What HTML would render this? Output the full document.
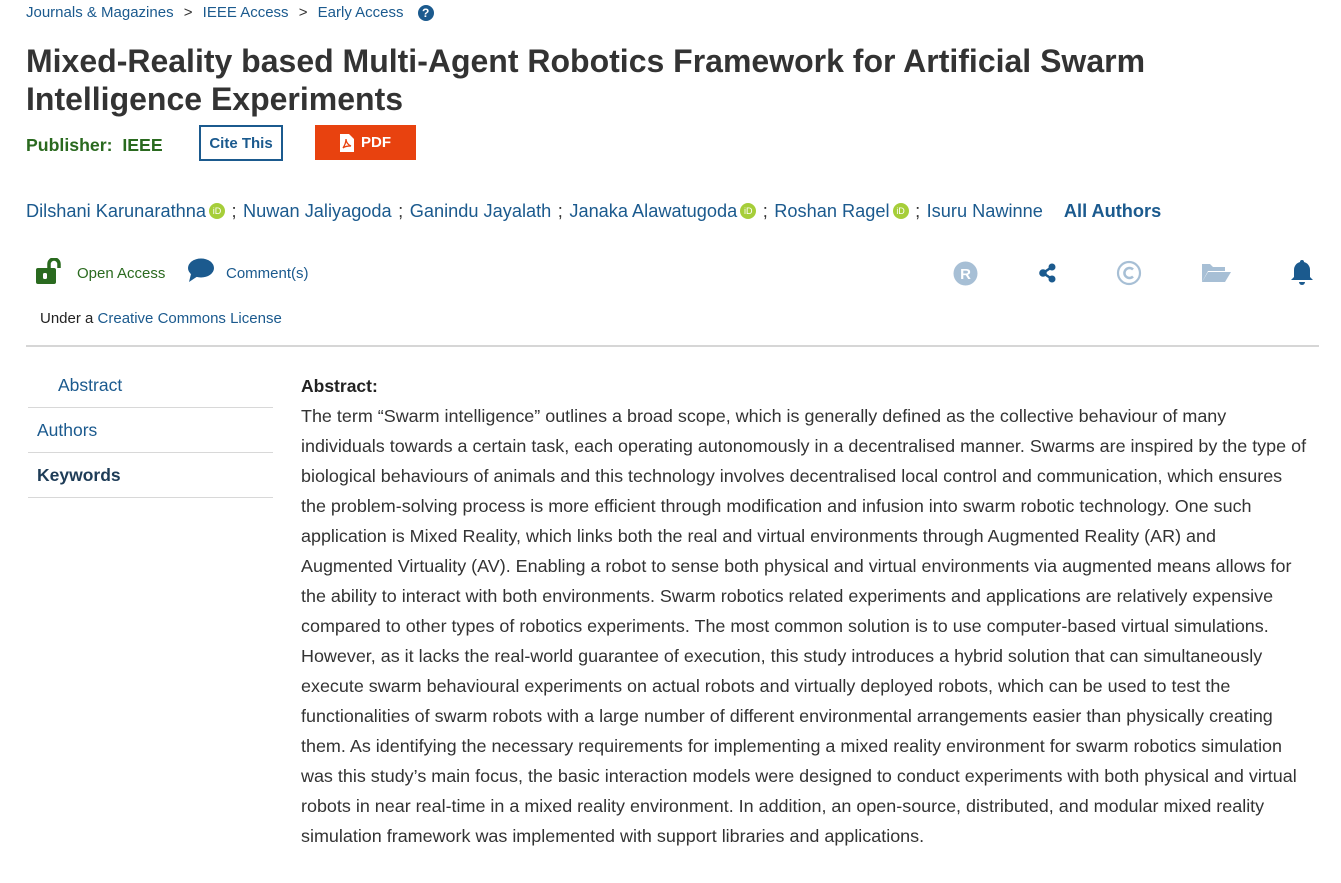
<!DOCTYPE html>
<html><head><meta charset="utf-8"><style>
*{margin:0;padding:0;box-sizing:border-box}
body{width:1341px;height:883px;background:#fff;font-family:"Liberation Sans",Arial,sans-serif;color:#333;position:relative;overflow:hidden}
.a{position:absolute;white-space:nowrap}
.blue{color:#1b5a8e}
.bc{top:4px;left:26px;font-size:15px}
.title{top:42px;left:26px;font-size:32px;font-weight:bold;line-height:38px;color:#333}
.pub{top:135px;left:26px;font-size:17.7px;font-weight:bold;color:#2a6a1f}
.cite{top:125px;left:199px;width:84px;height:36px;border:2px solid #1b5a8e;color:#1b5a8e;font-weight:bold;font-size:15px;text-align:center;line-height:34px}
.pdf{top:125px;left:315px;width:101px;height:35px;background:#e8420f;color:#fff;font-weight:bold;font-size:15px;line-height:35px}
.auth{top:201px;left:26px;font-size:18.2px;color:#1b5a8e}
.orc{display:inline-block;width:16px;height:16px;border-radius:50%;background:#a6ce39;color:#fff;font-size:9px;line-height:16px;text-align:center;vertical-align:3px;margin-left:3px}
.sep{color:#333;margin:0 6.5px}
.side{left:28px;width:245px;border-bottom:1px solid #d8d8d8;font-size:17.5px;height:45px}
.abs{left:301px;font-size:17.95px;line-height:30px;color:#333}
</style></head><body>
<div class="a bc blue">Journals &amp; Magazines <span style="color:#333;margin:0 6px">&gt;</span> IEEE Access <span style="color:#333;margin:0 6px">&gt;</span> Early Access <span style="display:inline-block;width:16px;height:16px;border-radius:50%;background:#1b5a8e;color:#fff;font-size:12px;font-weight:bold;text-align:center;line-height:16px;margin-left:10px">?</span></div>
<div class="a title">Mixed-Reality based Multi-Agent Robotics Framework for Artificial Swarm<br>Intelligence Experiments</div>
<div class="a pub">Publisher:&nbsp; IEEE</div>
<div class="a cite">Cite This</div>
<div class="a pdf"><svg style="position:absolute;left:25px;top:9px" width="14" height="18" viewBox="0 0 14 18"><path d="M0 0h9l5 5v13H0z" fill="#fff"/><path d="M3 14c2-3 3-6 3-9 0 3 2 6 5 7-3 0-6 0-8 2z" fill="none" stroke="#e8420f" stroke-width="1.3"/></svg><span style="position:absolute;left:46px">PDF</span></div>
<div class="a auth">Dilshani Karunarathna<span class="orc">iD</span><span class="sep">;</span>Nuwan Jaliyagoda<span class="sep">;</span>Ganindu Jayalath<span class="sep">;</span>Janaka Alawatugoda<span class="orc">iD</span><span class="sep">;</span>Roshan Ragel<span class="orc">iD</span><span class="sep">;</span>Isuru Nawinne<b style="margin-left:21px">All Authors</b></div>
<svg class="a" style="left:36px;top:258px" width="30" height="26" viewBox="0 0 30 26"><rect x="0" y="10" width="20" height="16" rx="2" fill="#2a6a1f"/><path d="M13 11V6a5 5 0 0 1 10 0v4" fill="none" stroke="#2a6a1f" stroke-width="3.5"/><rect x="7" y="15" width="4" height="6" rx="1.5" fill="#fff"/></svg>
<div class="a" style="left:77px;top:265px;font-size:15px;color:#2a6a1f">Open Access</div>
<svg class="a" style="left:187px;top:258px" width="28" height="25" viewBox="0 0 28 25"><ellipse cx="14" cy="10" rx="13" ry="9.5" fill="#1b5a8e"/><path d="M4 16 2 24 11 18z" fill="#1b5a8e"/></svg>
<div class="a blue" style="left:226px;top:265px;font-size:15px">Comment(s)</div>
<svg class="a" style="left:953px;top:261px" width="25" height="25"><circle cx="12.5" cy="12.5" r="12" fill="#a7bfd5"/><text x="12.5" y="18" text-anchor="middle" font-family="Liberation Sans" font-weight="bold" font-size="15" fill="#fff">R</text></svg>
<svg class="a" style="left:1038px;top:263px" width="20" height="20" viewBox="0 0 20 20"><path d="M14 4 5 10l9 6" stroke="#1b5a8e" stroke-width="2.5" fill="none"/><circle cx="14" cy="4" r="3.5" fill="#1b5a8e"/><circle cx="5" cy="10" r="3.8" fill="#1b5a8e"/><circle cx="14" cy="16" r="3.5" fill="#1b5a8e"/></svg>
<svg class="a" style="left:1116px;top:260px" width="26" height="26"><circle cx="13" cy="13" r="11" fill="none" stroke="#a7bfd5" stroke-width="2.2"/><path d="M17 9.5a5 5 0 1 0 0 7" fill="none" stroke="#a7bfd5" stroke-width="2.5"/></svg>
<svg class="a" style="left:1201px;top:262px" width="30" height="22" viewBox="0 0 30 22"><path d="M1 2h8l3 3h12v4H7L1 20z" fill="#a7bfd5"/><path d="M7 10h23l-6 10H1z" fill="#a7bfd5"/></svg>
<svg class="a" style="left:1290px;top:259px" width="24" height="28" viewBox="0 0 24 28"><path d="M12 1a2 2 0 0 1 2 2 8 8 0 0 1 6 8v7l3 3H1l3-3v-7a8 8 0 0 1 6-8 2 2 0 0 1 2-2z" fill="#1b5a8e"/><path d="M9 23h6a3 3 0 0 1-6 0z" fill="#1b5a8e"/></svg>
<div class="a" style="left:40px;top:310px;font-size:15px;color:#222">Under a <span class="blue">Creative Commons License</span></div>
<div class="a" style="left:26px;top:345px;width:1293px;height:2px;background:#d6d6d6"></div>
<div class="a side blue" style="top:363px;padding:12px 0 0 30px">Abstract</div>
<div class="a side blue" style="top:408px;padding:12px 0 0 9px">Authors</div>
<div class="a side" style="top:453px;padding:12px 0 0 9px;font-weight:bold;color:#1e3c57">Keywords</div>
<div class="a" style="left:301px;top:376px;font-size:17.5px;font-weight:bold;color:#222">Abstract:</div>
<div class="a abs" style="top:401px">The term “Swarm intelligence” outlines a broad scope, which is generally defined as the collective behaviour of many<br>individuals towards a certain task, each operating autonomously in a decentralised manner. Swarms are inspired by the type of<br>biological behaviours of animals and this technology involves decentralised local control and communication, which ensures<br>the problem-solving process is more efficient through modification and infusion into swarm robotic technology. One such<br>application is Mixed Reality, which links both the real and virtual environments through Augmented Reality (AR) and<br>Augmented Virtuality (AV). Enabling a robot to sense both physical and virtual environments via augmented means allows for<br>the ability to interact with both environments. Swarm robotics related experiments and applications are relatively expensive<br>compared to other types of robotics experiments. The most common solution is to use computer-based virtual simulations.<br>However, as it lacks the real-world guarantee of execution, this study introduces a hybrid solution that can simultaneously<br>execute swarm behavioural experiments on actual robots and virtually deployed robots, which can be used to test the<br>functionalities of swarm robots with a large number of different environmental arrangements easier than physically creating<br>them. As identifying the necessary requirements for implementing a mixed reality environment for swarm robotics simulation<br>was this study’s main focus, the basic interaction models were designed to conduct experiments with both physical and virtual<br>robots in near real-time in a mixed reality environment. In addition, an open-source, distributed, and modular mixed reality<br>simulation framework was implemented with support libraries and applications.</div>
</body></html>
